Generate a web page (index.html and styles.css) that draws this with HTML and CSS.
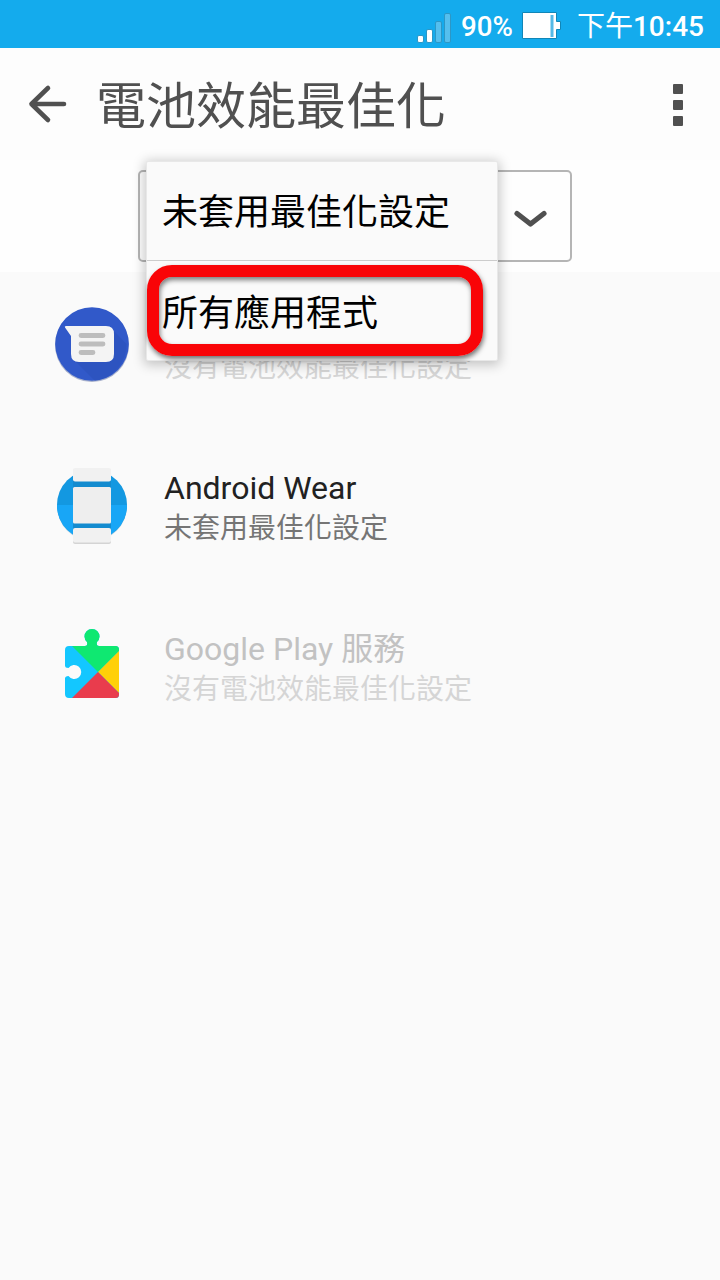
FILE: index.html
```html
<!DOCTYPE html>
<html lang="zh-Hant">
<head>
<meta charset="utf-8">
<title>電池效能最佳化</title>
<link rel="stylesheet" href="styles.css">
</head>
<body>
<div class="screen">
  <header class="status">
    <svg class="signal" width="36" height="32" viewBox="0 0 36 32">
      <g stroke="#2c97c6" stroke-width="1">
        <rect x="1.5" y="23.500" width="6" height="7" rx="1.5" fill="#fff"/>
        <rect x="10.5" y="17.500" width="6" height="13" rx="1.5" fill="#fff"/>
        <rect x="19.500" y="9.500" width="6" height="21" rx="1.5" fill="#55bfee"/>
        <rect x="28.500" y="1.500" width="6" height="29" rx="1.500" fill="#55bfee"/>
      </g>
    </svg>
    <span class="percent">90%</span>
    <svg class="battery" width="40" height="28" viewBox="0 0 40 28">
      <path d="M.5.5h34v9h4v8h-4v9H.5z" fill="#fff" stroke="#1186b7"/>
      <path d="M28.500 3h3v22h-3z" fill="#55b9e6"/>
    </svg>
    <span class="clock"><span class="period">下午</span>10:45</span>
  </header>
  <div class="toolbar">
    <svg class="back" width="40" height="40" viewBox="0 0 40 40" fill="none" stroke="#505050" stroke-width="4.600" stroke-linecap="round" stroke-linejoin="round"><path d="M21 4 4.500 20 21 36M4.500 20H37"/></svg>
    <h1 class="title">電池效能最佳化</h1>
    <div class="more"><i class="dot"></i><i class="dot"></i><i class="dot"></i></div>
  </div>
  <div class="filter">
    <div class="select">
      <svg width="34" height="20" viewBox="0 0 34 20" fill="none" stroke="#505050" stroke-width="5.200" stroke-linecap="round" stroke-linejoin="round"><path d="M4 4.500 17.500 15 31 4.500"/></svg>
      <div class="menu">
        <div class="option">未套用最佳化設定</div>
        <div class="option chosen">所有應用程式</div>
        <div class="highlight"></div>
      </div>
    </div>
  </div>
  <main class="list">
    <div class="row disabled">
      <svg class="icon" width="80" height="80" viewBox="0 0 80 80">
        <circle cx="40" cy="41" r="37" fill="#2c4487" opacity=".4"/>
        <circle cx="40" cy="40" r="36.800" fill="#3159c9"/>
        <path d="m21 55 39-30 14.500 15A37 37 0 0 1 43 77z" fill="#294db3" opacity=".4"/>
        <path d="M14 22h40q8 0 8 8v20q0 8-8 8H27q-8 0-8-8V32l-6-8.500q-.8-1.500 1-1.500z" fill="#f4f4f4"/>
        <path d="M29 31.500h22M29 40h22M29 48.500h12" stroke="#bdbdbd" stroke-width="4.800" stroke-linecap="round"/>
      </svg>
      <div class="text"><div class="name"></div><div class="note">沒有電池效能最佳化設定</div></div>
    </div>
    <div class="row">
      <svg class="icon" width="80" height="80" viewBox="0 0 80 80">
        <circle cx="40" cy="41" r="35" fill="#086aa3" opacity=".3"/>
        <circle cx="40" cy="40" r="35" fill="#1398e1"/>
        <path d="M5 40a35 35 0 0 0 70 0z" fill="#18a6f6"/>
        <rect x="21" y="4" width="38" height="75" rx="2" fill="#000" opacity=".15"/>
        <path d="M21 15h38v52H21z" fill="#138bcf"/>
        <rect x="21" y="3" width="38" height="13.500" rx="2" fill="#f1f1f1"/>
        <rect x="21" y="22" width="38" height="36.500" rx="1.500" fill="#eee"/>
        <rect x="21" y="63" width="38" height="14.500" rx="2" fill="#f1f1f1"/>
      </svg>
      <div class="text"><div class="name">Android Wear</div><div class="note">未套用最佳化設定</div></div>
    </div>
    <div class="row disabled">
      <svg class="icon" width="80" height="80" viewBox="0 0 80 80">
        <clipPath id="piece"><path d="M17 20h16q3 0 2-4a7.500 7.500 0 1 1 10 0q-1 4 2 4h16.500q3.500 0 3.500 3.500v45q0 3.500-3.500 3.500H17q-4 0-4-4V52.500q0-2.500 3.500-2.500a7 7 0 1 0 0-8q-3.500 0-3.500-2.500V24q0-4 4-4z"/></clipPath>
        <g clip-path="url(#piece)">
          <path d="M13 0h54v75H13z" fill="#13c7ff"/>
          <path d="M18 18V0h49v25L46 46z" fill="#0fe871"/>
          <path d="M67 25v42L46 46z" fill="#ffd008"/>
          <path d="M19 73 46 46l26 26z" fill="#e93c4d"/>
        </g>
      </svg>
      <div class="text"><div class="name">Google Play 服務</div><div class="note">沒有電池效能最佳化設定</div></div>
    </div>
  </main>
</div>
</body>
</html>
```
FILE: styles.css
```css
* { box-sizing: border-box; }
body {
  margin: 0;
  background: #fafafa;
  font-family: Roboto, "Noto Sans CJK TC", sans-serif;
}
.screen { width: 720px; height: 1280px; overflow: hidden; }
svg { display: block; flex: none; }

.status {
  height: 48px;
  padding: 0 16px 0 416px;
  display: flex;
  align-items: center;
  background: #14abed;
  color: #fff;
  font-size: 28px;
  font-weight: 500;
  line-height: 48px;
  white-space: nowrap;
}
.signal { margin-top: 7px; }
.percent { margin-left: 9px; width: 61px; padding-top: 5px; font-size: 27.700px; }
.battery { margin-top: 3px; }
.clock { margin-left: auto; padding-top: 5px; }
.period { font-weight: 400; }

.toolbar {
  height: 112px;
  padding: 0 37px 0 27px;
  display: flex;
  align-items: center;
  background: #fdfdfd;
}
.title {
  margin: 0 0 0 29px;
  padding-top: 6px;
  color: #505050;
  font-size: 50px;
  font-weight: 400;
  line-height: 64px;
}
.more {
  margin-left: auto;
  padding-top: 2px;
  display: flex;
  flex-direction: column;
  gap: 6px;
}
.dot { width: 10px; height: 10px; border-radius: 1px; background: #505050; }

.filter {
  height: 112px;
  padding: 10px 138px 0;
  background: #fefefe;
}
.select {
  position: relative;
  width: 434px;
  height: 92px;
  padding: 6px 23px 0 0;
  display: flex;
  align-items: center;
  justify-content: flex-end;
  border: 2px solid #b5b5b5;
  border-radius: 5px;
}
.menu {
  position: absolute;
  z-index: 2;
  left: 6px;
  top: -11px;
  width: 352px;
  height: 200px;
  border: 1px solid #e8e8e8;
  border-radius: 2px;
  background: #fafafa;
  box-shadow: 0 2px 12px 2px rgba(0, 0, 0, .22);
}
.option {
  height: 99px;
  padding-left: 15px;
  border-bottom: 1px solid #ccc;
  color: #000;
  font-size: 36px;
  line-height: 102px;
  white-space: nowrap;
}
.option.chosen { border-bottom: 0; line-height: 106px; }
.highlight {
  position: absolute;
  left: 0;
  top: 103px;
  width: 336px;
  height: 91px;
  border: 12px solid #f90407;
  border-radius: 25px;
  box-shadow: 1px 3px 5px rgba(0, 0, 0, .55), inset 1px 3px 5px rgba(0, 0, 0, .5);
}

.list { padding-top: 32px; }
.row {
  height: 161px;
  padding-left: 52px;
  display: flex;
  gap: 32px;
  white-space: nowrap;
}
.name {
  height: 40px;
  padding-top: 3px;
  color: #212121;
  font-size: 32px;
  line-height: 40px;
}
.note {
  margin-top: 4px;
  color: #757575;
  font-size: 28px;
  font-weight: 400;
  line-height: 40px;
}
.disabled .name { color: #c2c2c2; }
.disabled .note { color: #d5d5d5; }
```
